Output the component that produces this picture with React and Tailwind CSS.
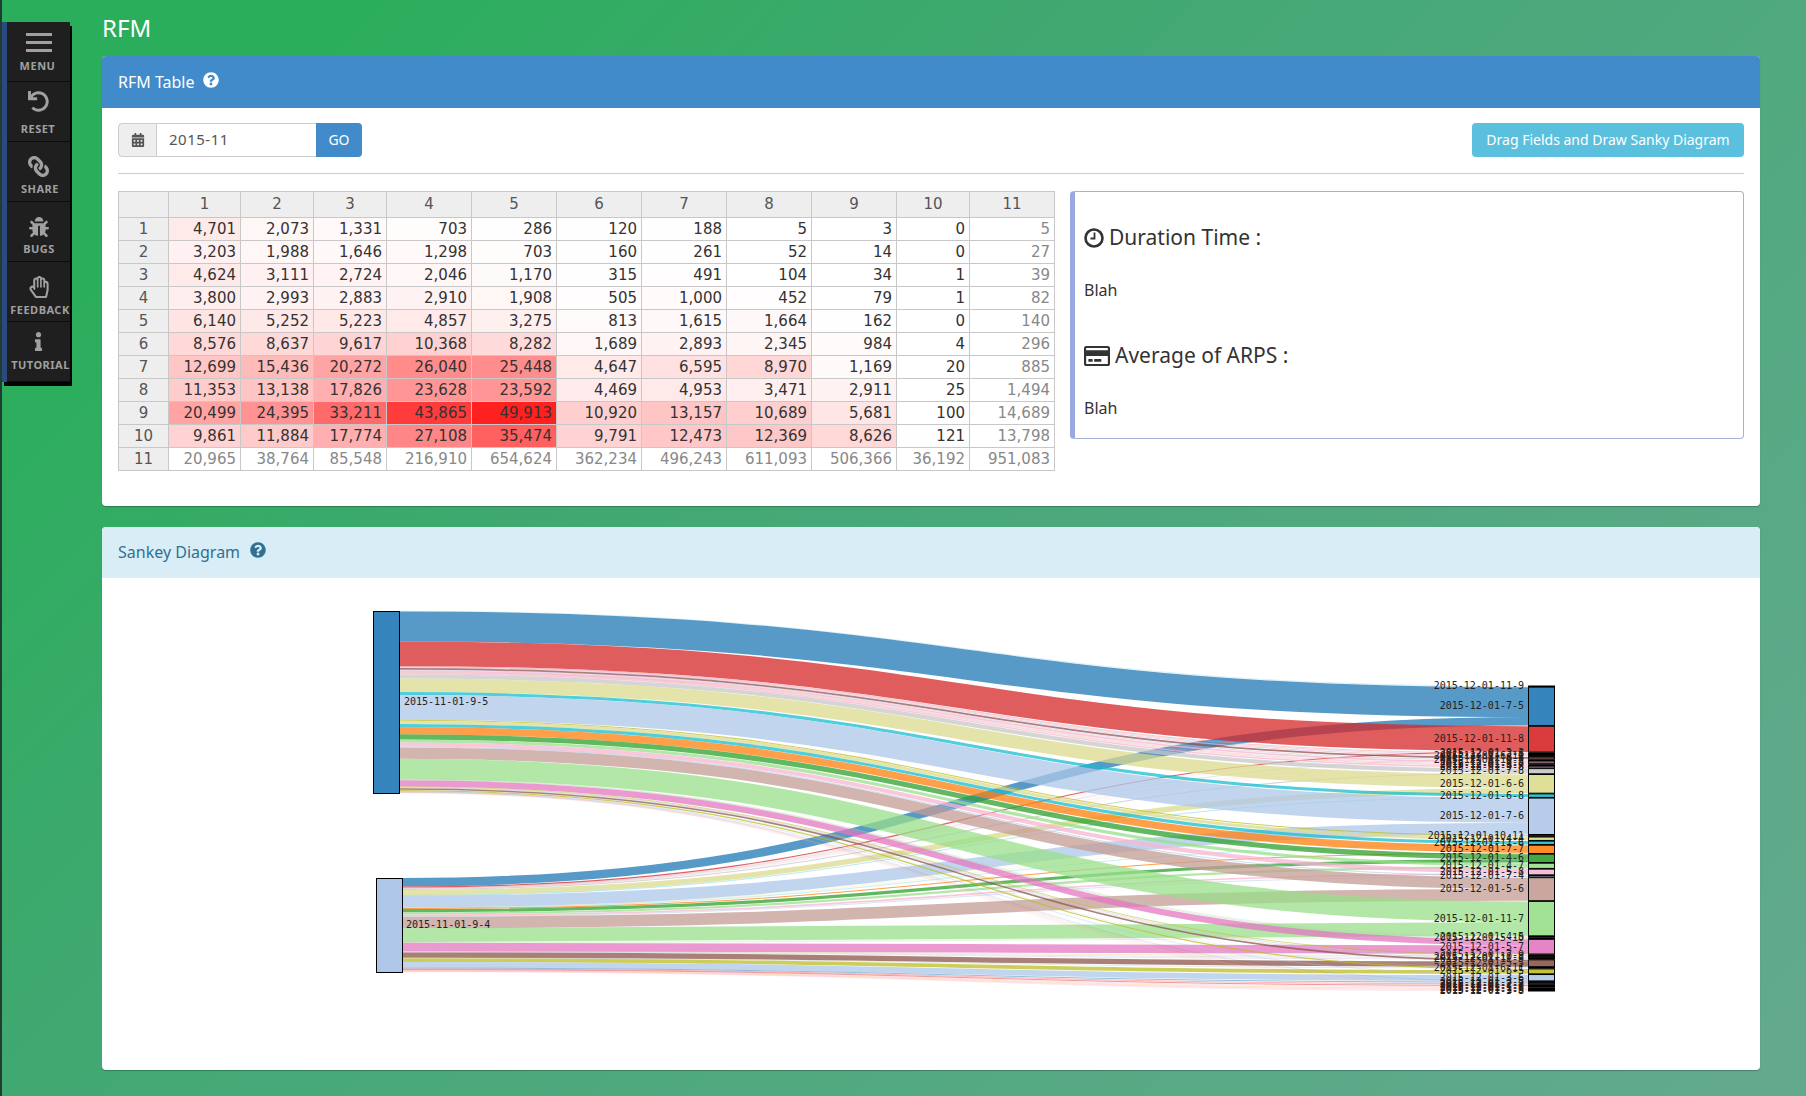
import React from 'react';
import { FaUndo, FaLink, FaBug, FaRegHandPaper, FaInfo, FaCalendarAlt, FaQuestionCircle, FaRegCreditCard } from 'react-icons/fa';

const MenuBars = () => (
  <svg width="26" height="20" viewBox="0 0 26 20" fill="currentColor">
    <rect width="26" height="3" />
    <rect y="8" width="26" height="3" />
    <rect y="16" width="26" height="3" />
  </svg>
);

const ClockIcon = () => (
  <svg width="20" height="20" viewBox="0 0 20 20" fill="none" stroke="currentColor">
    <circle cx="10" cy="10" r="8.5" strokeWidth="2.6" />
    <path d="M10.5 4.5V10.5H6.5" strokeWidth="1.8" />
  </svg>
);

const menuItems = [
  { label: 'MENU', icon: <MenuBars />, box: 'pt-[11px]', text: 'mt-[6px] -ml-[2px]' },
  { label: 'RESET', icon: <FaUndo size={21} />, box: 'pt-[9px]', text: 'mt-[10px] -ml-[1px]' },
  { label: 'SHARE', icon: <FaLink size={21} className="-scale-x-100" />, box: 'pt-[14px]', text: 'mt-[5px] ml-[3px]' },
  { label: 'BUGS', icon: <FaBug size={20} />, box: 'pt-[15px]', text: 'mt-[5px] ml-[1px]' },
  { label: 'FEEDBACK', icon: <FaRegHandPaper size={22} />, box: 'pt-[14px]', text: 'mt-[5px] ml-[3px]' },
  { label: 'TUTORIAL', icon: <FaInfo size={19} />, box: 'pt-[10px]', text: 'mt-[7px] ml-[4px]' },
];

const rfm = [
  [4701, 2073, 1331, 703, 286, 120, 188, 5, 3, 0, 5],
  [3203, 1988, 1646, 1298, 703, 160, 261, 52, 14, 0, 27],
  [4624, 3111, 2724, 2046, 1170, 315, 491, 104, 34, 1, 39],
  [3800, 2993, 2883, 2910, 1908, 505, 1000, 452, 79, 1, 82],
  [6140, 5252, 5223, 4857, 3275, 813, 1615, 1664, 162, 0, 140],
  [8576, 8637, 9617, 10368, 8282, 1689, 2893, 2345, 984, 4, 296],
  [12699, 15436, 20272, 26040, 25448, 4647, 6595, 8970, 1169, 20, 885],
  [11353, 13138, 17826, 23628, 23592, 4469, 4953, 3471, 2911, 25, 1494],
  [20499, 24395, 33211, 43865, 49913, 10920, 13157, 10689, 5681, 100, 14689],
  [9861, 11884, 17774, 27108, 35474, 9791, 12473, 12369, 8626, 121, 13798],
  [20965, 38764, 85548, 216910, 654624, 362234, 496243, 611093, 506366, 36192, 951083],
];

const colWidths = [50, 72, 73, 73, 85, 85, 85, 85, 85, 85, 73, 85];

// label, colour, width from the 9-5 node, width from the 9-4 node
const flows = [
  ['11-9', '#9edae5', 0.5, 0],
  ['7-5', '#1f77b4', 29, 8],
  ['11-8', '#d62728', 24, 1],
  ['3-3', '#ff9896', 0.7, 0.1],
  ['2-6', '#9467bd', 0.3, 0.1],
  ['6-11', '#f7b6d2', 0.9, 0.1],
  ['8-6', '#8c564b', 1.7, 0.2],
  ['10-7', '#c5b0d5', 0.6, 0.1],
  ['8-5', '#f7b6d2', 1.6, 0.2],
  ['1-6', '#c49c94', 0.4, 0.1],
  ['3-7', '#ff9896', 0.5, 0.1],
  ['9-8', '#f7b6d2', 1.4, 0.2],
  ['7-8', '#c7c7c7', 4, 1],
  ['6-6', '#dbdb8d', 13, 5],
  ['6-8', '#17becf', 3, 0.4],
  ['7-6', '#aec7e8', 24, 11],
  ['10-11', '#bcbd22', 1, 0.1],
  ['4-4', '#dbdb8d', 3, 0.3],
  ['11-6', '#17becf', 3, 0.3],
  ['7-7', '#ff7f0e', 7, 1],
  ['4-6', '#2ca02c', 5, 3],
  ['4-7', '#98df8a', 3, 2],
  ['5-8', '#f7b6d2', 4, 1.5],
  ['7-4', '#aec7e8', 0.8, 0.6],
  ['5-6', '#c49c94', 11, 11],
  ['11-7', '#98df8a', 20, 13],
  ['4-5', '#c7c7c7', 0.4, 0.2],
  ['5-10', '#98df8a', 0.5, 0.3],
  ['5-7', '#e377c2', 6, 8],
  ['7-9', '#bcbd22', 0.7, 0.3],
  ['10-8', '#c7c7c7', 0.6, 0.5],
  ['11-5', '#c5b0d5', 0.4, 0.4],
  ['5-5', '#8c564b', 1.5, 5],
  ['6-11', '#c7c7c7', 0.3, 0.5],
  ['6-5', '#bcbd22', 1.2, 3.5],
  ['3-6', '#aec7e8', 0.5, 5.5],
  ['3-5', '#1f77b4', 0.2, 0.6],
  ['2-7', '#ff9896', 0.2, 0.9],
  ['2-8', '#d62728', 0.1, 0.6],
  ['1-7', '#f7b6d2', 0.2, 0.5],
  ['1-8', '#ffbb78', 0.2, 0.5],
  ['1-5', '#ff9896', 0.1, 0.4],
  ['3-8', '#f7b6d2', 0.1, 0.4],
];

const sumA = flows.reduce((t, f) => t + f[2], 0);
const sumB = flows.reduce((t, f) => t + f[3], 0);
const scaleA = 182 / sumA;
const scaleB = 94 / sumB;

const buildSankey = () => {
  const total = flows.reduce((t, f) => t + f[2] * scaleA + f[3] * scaleB, 0);
  const gap = (305 - total) / (flows.length - 1);
  let ya = 611;
  let yb = 878;
  let yr = 686;
  const links = [];
  const nodes = [];
  flows.forEach(([label, color, a, b]) => {
    const wa = a * scaleA;
    const wb = b * scaleB;
    links.push({ color, y0: ya + wa / 2, y1: yr + wa / 2, w: wa, x0: 399 });
    links.push({ color, y0: yb + wb / 2, y1: yr + wa + wb / 2, w: wb, x0: 402 });
    nodes.push({ label, color, y: yr, h: wa + wb });
    ya += wa;
    yb += wb;
    yr += wa + wb + gap;
  });
  return { links, nodes };
};

const Panel = ({ title, header, children }) => (
  <div className="bg-white rounded overflow-hidden shadow-[0_1px_1px_rgba(0,0,0,0.25)]">
    <div className={`flex items-center px-4 text-base ${header}`}>
      <span>{title}</span>
      <FaQuestionCircle className="mb-1" size={16} />
    </div>
    {children}
  </div>
);

const SankeyDiagram = () => {
  const { links, nodes } = buildSankey();
  return (
    <svg className="block w-full h-[492px]" viewBox="102 578 1658 492">
      {links.map((l, i) => (
        <path
          key={i}
          d={`M${l.x0} ${l.y0}C964 ${l.y0} 964 ${l.y1} 1528 ${l.y1}`}
          fill="none"
          stroke={l.color}
          strokeOpacity="0.75"
          strokeWidth={l.w}
        />
      ))}
      <rect x="373.5" y="611.5" width="26" height="182" fill="#3584bc" stroke="#000" />
      <rect x="376.5" y="878.5" width="26" height="94" fill="#aec7e8" stroke="#000" />
      {nodes.map((n, i) => (
        <rect key={i} x="1528.5" y={n.y} width="26" height={n.h} fill={n.color} fillOpacity="0.9" stroke="#000" />
      ))}
      <g fontFamily="'DejaVu Sans Mono', monospace" fontSize="10" fill="#222">
        <text x="404" y="705">2015-11-01-9-5</text>
        <text x="406" y="928">2015-11-01-9-4</text>
        {nodes.map((n, i) => (
          <text key={i} x="1524" y={n.y + n.h / 2 + 3} textAnchor="end">{`2015-12-01-${n.label}`}</text>
        ))}
      </g>
    </svg>
  );
};

const RfmTable = () => (
  <table className="table-fixed border-collapse w-[936px] text-[15px] leading-none text-[#333] font-['DejaVu_Sans',sans-serif]">
    <colgroup>
      {colWidths.map((w, i) => (
        <col key={i} style={{ width: w }} />
      ))}
    </colgroup>
    <thead>
      <tr className="h-[26px] bg-[#eeeeee] text-[#555]">
        <th className="border border-[#c8c8c8] font-normal" />
        {colWidths.slice(1).map((_, i) => (
          <th key={i} className="border border-[#c8c8c8] font-normal">{i + 1}</th>
        ))}
      </tr>
    </thead>
    <tbody>
      {rfm.map((row, r) => (
        <tr key={r} className="h-[23px]">
          <td className="border border-[#c8c8c8] bg-[#eeeeee] text-center text-[#555]">{r + 1}</td>
          {row.map((v, c) => {
            const muted = r === 10 || c === 10;
            return (
              <td
                key={c}
                className={`border border-[#c8c8c8] text-right pr-[4px] whitespace-nowrap overflow-hidden ${muted ? 'text-[#888]' : ''}`}
                style={muted ? undefined : { backgroundColor: `rgba(255,0,0,${v / 57000})` }}
              >
                {v.toLocaleString('en-US')}
              </td>
            );
          })}
        </tr>
      ))}
    </tbody>
  </table>
);

const App = () => {
  return (
    <div className="flex w-full h-[1096px] overflow-hidden border-l-2 border-[#1f3d30] bg-[linear-gradient(135deg,#2aae5b_12%,#41a872_38%,#50a97f_62%,#64a98f_100%)] font-['Noto_Sans',sans-serif]">
      {/* Side menu */}
      <div className="w-[100px] shrink-0 pt-[22px]">
        <div className="w-[68px] border-l-[5px] border-[#2a4a80] bg-[#1f1f1f] shadow-[2px_4px_0_#050505]">
          {menuItems.map(({ label, icon, box, text }) => (
            <div key={label} className={`h-[60px] flex flex-col items-center border-b border-[#0c0c0c] text-[#a0a0a0] ${box}`}>
              {icon}
              <span className={`text-[11px] leading-[14px] font-bold tracking-[0.5px] ${text}`}>{label}</span>
            </div>
          ))}
        </div>
      </div>

      {/* Main */}
      <div className="w-[1658px] shrink-0">
        <h1 className="h-[56px] flex items-center text-2xl text-white">RFM</h1>

        <Panel title="RFM Table" header="h-[52px] gap-2 bg-[#428bca] text-white">
          <div className="px-[16px] pt-[15px] pb-[35px]">
            <div className="flex justify-between h-[34px]">
              <div className="flex text-sm">
                <span className="w-[39px] flex items-center justify-center bg-[#eeeeee] border border-[#cccccc] rounded-l text-[#555]">
                  <FaCalendarAlt size={14} />
                </span>
                <span className="w-[159px] flex items-center pl-3 border-y border-[#cccccc] text-[#555] text-[15px] tracking-[0.5px]">2015-11</span>
                <span className="w-[46px] flex items-center justify-center bg-[#428bca] text-white rounded-r">GO</span>
              </div>
              <button className="w-[272px] bg-[#5bc0de] text-white text-sm rounded">Drag Fields and Draw Sanky Diagram</button>
            </div>
            <hr className="mt-[16px] mb-[17px] border-[#cccccc]" />
            <div className="flex gap-[15px] items-start">
              <RfmTable />
              <div className="w-[675px] h-[248px] border border-[#a5b2d8] border-l-[5px] border-l-[#99a8e2] rounded pl-[9px] text-[#333]">
                <h3 className="mt-[30px] h-[32px] flex items-center gap-[5px] text-[21px]">
                  <ClockIcon /> Duration Time :
                </h3>
                <p className="mt-[26px] h-[20px] text-[16px] leading-5">Blah</p>
                <h3 className="mt-[40px] h-[32px] flex items-center gap-[5px] text-[21px]">
                  <FaRegCreditCard size={26} /> Average of ARPS :
                </h3>
                <p className="mt-[26px] h-[20px] text-[16px] leading-5">Blah</p>
              </div>
            </div>
          </div>
        </Panel>

        <div className="mt-[21px]">
          <Panel title="Sankey Diagram" header="h-[51px] gap-[10px] pb-[2px] bg-[#d9edf7] text-[#31708f]">
            <SankeyDiagram />
          </Panel>
        </div>
      </div>
    </div>
  );
};

export default App;
